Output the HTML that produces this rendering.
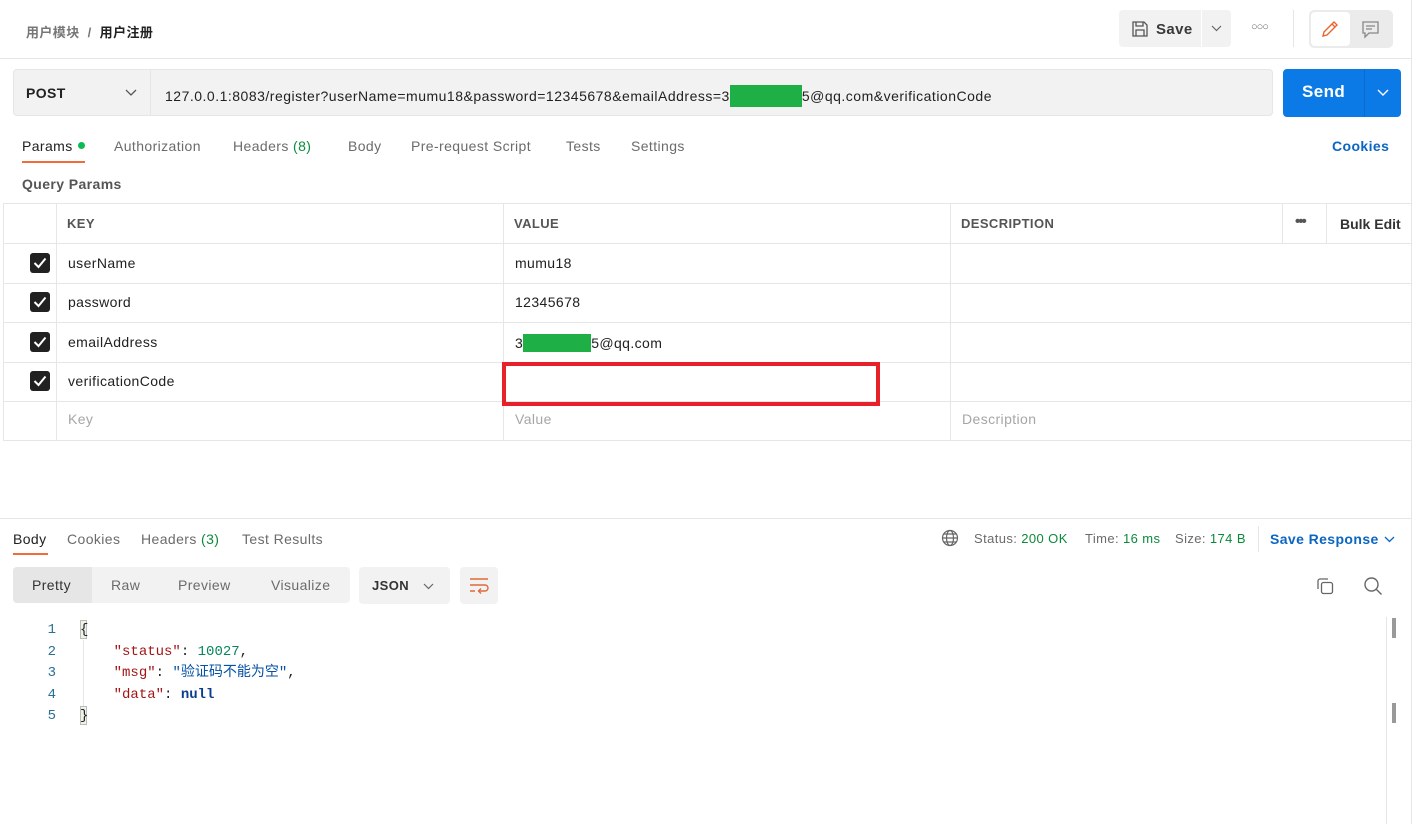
<!DOCTYPE html>
<html><head><meta charset="utf-8"><style>
*{box-sizing:border-box;margin:0;padding:0}
body{width:1424px;height:824px;background:#fff;font-family:"Liberation Sans","Noto Sans CJK SC",sans-serif;font-size:14px;color:#212121;position:relative;overflow:hidden;letter-spacing:.4px}
.a{position:absolute;white-space:nowrap}
.g{color:#6b6b6b}
.line{position:absolute;background:#e6e6e6}
.cb{position:absolute;left:30px;width:20px;height:20px;background:#212121;border-radius:3px}
.cb svg{position:absolute;left:3px;top:4px}
.mono{font-family:"Liberation Mono","Noto Sans CJK SC",monospace;font-size:14px;letter-spacing:0}
</style></head><body>
<div class="line" style="left:1411px;top:0;width:1px;height:824px"></div>
<div class="a" style="left:26px;top:22px;font-size:13px;color:#777;font-weight:bold">用户模块 &nbsp;/&nbsp; <span style="color:#212121">用户注册</span></div>
<div class="a" style="left:1119px;top:10px;width:82px;height:37px;background:#f2f2f2;border-radius:4px 0 0 4px"></div>
<div class="a" style="left:1202px;top:10px;width:29px;height:37px;background:#f2f2f2;border-radius:0 4px 4px 0"></div>
<svg class="a" style="left:1131px;top:20px" width="18" height="18" viewBox="0 0 18 18" fill="none" stroke="#555" stroke-width="1.3"><path d="M2 2h11l3 3v11H2z"/><path d="M5 2v4h7V2M5 16v-6h8v6"/></svg>
<div class="a" style="left:1156px;top:21px;font-size:15px;color:#3a3a3a;font-weight:bold">Save</div>
<svg class="a" style="left:1211px;top:25px" width="11" height="7"><path d="M1 1l4.5 4.5L10 1" fill="none" stroke="#666" stroke-width="1.2"/></svg>
<div class="a g" style="left:1251px;top:21px;font-size:11px;letter-spacing:-1px">○○○</div>
<div class="line" style="left:1293px;top:10px;width:1px;height:37px"></div>
<div class="a" style="left:1309px;top:10px;width:84px;height:38px;background:#ebebeb;border-radius:5px"></div>
<div class="a" style="left:1311px;top:12px;width:39px;height:34px;background:#fff;border-radius:4px"></div>
<svg class="a" style="left:1320px;top:19px" width="20" height="20" viewBox="0 0 20 20" fill="none" stroke="#e8662e" stroke-width="1.4"><path d="M3 17l1-4L14 3l3 3L7 16z"/><path d="M12 5l3 3"/></svg>
<svg class="a" style="left:1361px;top:20px" width="19" height="19" viewBox="0 0 19 19" fill="none" stroke="#888" stroke-width="1.3"><path d="M2 2h15v11H8l-4 4v-4H2z"/><path d="M5 6h9M5 9h6"/></svg>
<div class="line" style="left:0;top:58px;width:1411px;height:1px"></div>
<div class="a" style="left:13px;top:69px;width:1260px;height:47px;background:#f2f2f2;border:1px solid #e6e6e6;border-radius:4px"></div>
<div class="line" style="left:150px;top:69px;width:1px;height:47px"></div>
<div class="a" style="left:26px;top:85px;font-weight:bold;font-size:14px">POST</div>
<svg class="a" style="left:125px;top:89px" width="12" height="7"><path d="M1 1l5 5 5-5" fill="none" stroke="#555" stroke-width="1.3"/></svg>
<div class="a" style="left:165px;top:85px;font-size:14px;letter-spacing:.5px">127.0.0.1:8083/register?userName=mumu18&amp;password=12345678&amp;emailAddress=3<span style="display:inline-block;width:72px;height:22px;background:#1eb046;vertical-align:-6px"></span>5@qq.com&amp;verificationCode</div>
<div class="a" style="left:1283px;top:69px;width:118px;height:48px;background:#0c7ae6;border-radius:4px"></div>
<div class="a" style="left:1364px;top:69px;width:1px;height:48px;background:#0a6bcc"></div>
<div class="a" style="left:1302px;top:82px;color:#fff;font-weight:bold;font-size:17px">Send</div>
<svg class="a" style="left:1377px;top:89px" width="12" height="7"><path d="M1 1l5 5 5-5" fill="none" stroke="#fff" stroke-width="1.4"/></svg>
<div class="a" style="left:22px;top:138px;color:#212121">Params</div>
<div class="a" style="left:78px;top:142px;width:7px;height:7px;border-radius:50%;background:#0cbb52"></div>
<div class="a" style="left:22px;top:161px;width:63px;height:2px;background:#f26b3a"></div>
<div class="a g" style="left:114px;top:138px">Authorization</div>
<div class="a g" style="left:233px;top:138px">Headers <span style="color:#0c8a3c">(8)</span></div>
<div class="a g" style="left:348px;top:138px">Body</div>
<div class="a g" style="left:411px;top:138px">Pre-request Script</div>
<div class="a g" style="left:566px;top:138px">Tests</div>
<div class="a g" style="left:631px;top:138px">Settings</div>
<div class="a" style="left:1332px;top:138px;color:#0b65c2;font-weight:bold">Cookies</div>
<div class="a" style="left:22px;top:176px;color:#555;font-weight:bold">Query Params</div>
<div class="line" style="left:3px;top:203px;width:1408px;height:1px"></div>
<div class="line" style="left:3px;top:243px;width:1408px;height:1px"></div>
<div class="line" style="left:3px;top:283px;width:1408px;height:1px"></div>
<div class="line" style="left:3px;top:322px;width:1408px;height:1px"></div>
<div class="line" style="left:3px;top:362px;width:1408px;height:1px"></div>
<div class="line" style="left:3px;top:401px;width:1408px;height:1px"></div>
<div class="line" style="left:3px;top:440px;width:1408px;height:1px"></div>
<div class="line" style="left:3px;top:203px;width:1px;height:238px"></div>
<div class="line" style="left:56px;top:203px;width:1px;height:238px"></div>
<div class="line" style="left:503px;top:203px;width:1px;height:238px"></div>
<div class="line" style="left:950px;top:203px;width:1px;height:238px"></div>
<div class="line" style="left:1282px;top:203px;width:1px;height:40px"></div>
<div class="line" style="left:1326px;top:203px;width:1px;height:40px"></div>
<div class="a" style="left:67px;top:216px;color:#555;font-weight:bold;font-size:13px">KEY</div>
<div class="a" style="left:514px;top:216px;color:#555;font-weight:bold;font-size:13px">VALUE</div>
<div class="a" style="left:961px;top:216px;color:#555;font-weight:bold;font-size:13px">DESCRIPTION</div>
<div class="a" style="left:1295px;top:213px;font-size:15px;letter-spacing:-2px;font-weight:bold;color:#555">•••</div>
<div class="a" style="left:1340px;top:216px;font-weight:bold;color:#333;letter-spacing:0">Bulk Edit</div>
<div class="cb" style="top:253px"><svg width="14" height="12"><path d="M1.5 6l4 4 7-8.5" fill="none" stroke="#fff" stroke-width="2"/></svg></div>
<div class="cb" style="top:292px"><svg width="14" height="12"><path d="M1.5 6l4 4 7-8.5" fill="none" stroke="#fff" stroke-width="2"/></svg></div>
<div class="cb" style="top:332px"><svg width="14" height="12"><path d="M1.5 6l4 4 7-8.5" fill="none" stroke="#fff" stroke-width="2"/></svg></div>
<div class="cb" style="top:371px"><svg width="14" height="12"><path d="M1.5 6l4 4 7-8.5" fill="none" stroke="#fff" stroke-width="2"/></svg></div>
<div class="a" style="left:68px;top:255px">userName</div>
<div class="a" style="left:515px;top:255px">mumu18</div>
<div class="a" style="left:68px;top:294px">password</div>
<div class="a" style="left:515px;top:294px">12345678</div>
<div class="a" style="left:68px;top:334px">emailAddress</div>
<div class="a" style="left:515px;top:334px">3<span style="display:inline-block;width:68px;height:18px;background:#1eb046;vertical-align:-4px"></span>5@qq.com</div>
<div class="a" style="left:68px;top:373px">verificationCode</div>
<div class="a" style="left:502px;top:362px;width:378px;height:44px;border:4px solid #e8202a"></div>
<div class="a" style="left:68px;top:411px;color:#a6a6a6">Key</div>
<div class="a" style="left:515px;top:411px;color:#a6a6a6">Value</div>
<div class="a" style="left:962px;top:411px;color:#a6a6a6">Description</div>
<div class="line" style="left:0;top:518px;width:1411px;height:1px"></div>
<div class="a" style="left:13px;top:531px">Body</div>
<div class="a" style="left:13px;top:553px;width:35px;height:2px;background:#f26b3a"></div>
<div class="a g" style="left:67px;top:531px">Cookies</div>
<div class="a g" style="left:141px;top:531px">Headers <span style="color:#0c8a3c">(3)</span></div>
<div class="a g" style="left:242px;top:531px">Test Results</div>
<svg class="a" style="left:941px;top:529px" width="18" height="18" viewBox="0 0 18 18" fill="none" stroke="#666" stroke-width="1.2"><circle cx="9" cy="9" r="7.5"/><ellipse cx="9" cy="9" rx="3.5" ry="7.5"/><path d="M1.5 9h15M3 5h12M3 13h12"/></svg>
<div class="a g" style="left:974px;top:531px;font-size:13px">Status: <span style="color:#0c8a3c">200 OK</span></div>
<div class="a g" style="left:1085px;top:531px;font-size:13px">Time: <span style="color:#0c8a3c">16 ms</span></div>
<div class="a g" style="left:1175px;top:531px;font-size:13px">Size: <span style="color:#0c8a3c">174 B</span></div>
<div class="line" style="left:1258px;top:526px;width:1px;height:26px"></div>
<div class="a" style="left:1270px;top:531px;color:#0b65c2;font-weight:bold">Save Response</div>
<svg class="a" style="left:1384px;top:536px" width="11" height="7"><path d="M1 1l4.5 4.5L10 1" fill="none" stroke="#0b65c2" stroke-width="1.3"/></svg>
<div class="a" style="left:13px;top:567px;width:337px;height:36px;background:#f2f2f2;border-radius:4px"></div>
<div class="a" style="left:13px;top:567px;width:79px;height:36px;background:#e6e6e6;border-radius:4px 0 0 4px"></div>
<div class="a" style="left:32px;top:577px;color:#333">Pretty</div>
<div class="a g" style="left:111px;top:577px">Raw</div>
<div class="a g" style="left:178px;top:577px">Preview</div>
<div class="a g" style="left:271px;top:577px">Visualize</div>
<div class="a" style="left:359px;top:567px;width:91px;height:37px;background:#f2f2f2;border-radius:4px"></div>
<div class="a" style="left:372px;top:578px;font-weight:bold;font-size:13px;color:#333">JSON</div>
<svg class="a" style="left:423px;top:583px" width="11" height="7"><path d="M1 1l4.5 4.5L10 1" fill="none" stroke="#666" stroke-width="1.2"/></svg>
<div class="a" style="left:460px;top:567px;width:38px;height:37px;background:#f2f2f2;border-radius:4px"></div>
<svg class="a" style="left:469px;top:577px" width="20" height="17" viewBox="0 0 20 17" fill="none" stroke="#e06a3b" stroke-width="1.4"><path d="M1 2h18M1 8h15a3 3 0 010 6H10M1 14h5"/><path d="M12 11.5l-2.5 2.5 2.5 2.5"/></svg>
<svg class="a" style="left:1316px;top:577px" width="19" height="19" viewBox="0 0 19 19" fill="none" stroke="#666" stroke-width="1.3"><rect x="5.5" y="5.5" width="11" height="11" rx="2"/><path d="M2 12V4a2 2 0 012-2h8"/></svg>
<svg class="a" style="left:1363px;top:576px" width="20" height="20" viewBox="0 0 20 20" fill="none" stroke="#666" stroke-width="1.4"><circle cx="8.5" cy="8.5" r="6.5"/><path d="M13.5 13.5l5 5"/></svg>
<div class="line" style="left:1386px;top:617px;width:1px;height:207px"></div>
<div class="a" style="left:1392px;top:618px;width:4px;height:20px;background:#999"></div>
<div class="a" style="left:1392px;top:703px;width:4px;height:20px;background:#999"></div>
<div class="a mono" style="left:46px;top:620px;color:#2a6f97;line-height:21.5px;text-align:right;width:10px">1<br>2<br>3<br>4<br>5</div>
<div class="a" style="left:80px;top:620px;width:7px;height:19px;border:1px solid #bbb;background:#eef3e8"></div>
<div class="a" style="left:80px;top:706px;width:7px;height:19px;border:1px solid #bbb;background:#eef3e8"></div>
<div class="line" style="left:83px;top:640px;width:1px;height:66px"></div>
<div class="a mono" style="left:80px;top:620px;line-height:21.5px;color:#212121">{<br>&nbsp;&nbsp;&nbsp;&nbsp;<span style="color:#a31515">"status"</span>: <span style="color:#098658">10027</span>,<br>&nbsp;&nbsp;&nbsp;&nbsp;<span style="color:#a31515">"msg"</span>: <span style="color:#0451a5">"验证码不能为空"</span>,<br>&nbsp;&nbsp;&nbsp;&nbsp;<span style="color:#a31515">"data"</span>: <span style="color:#0b3d8c;font-weight:bold">null</span><br>}</div>
</body></html>
